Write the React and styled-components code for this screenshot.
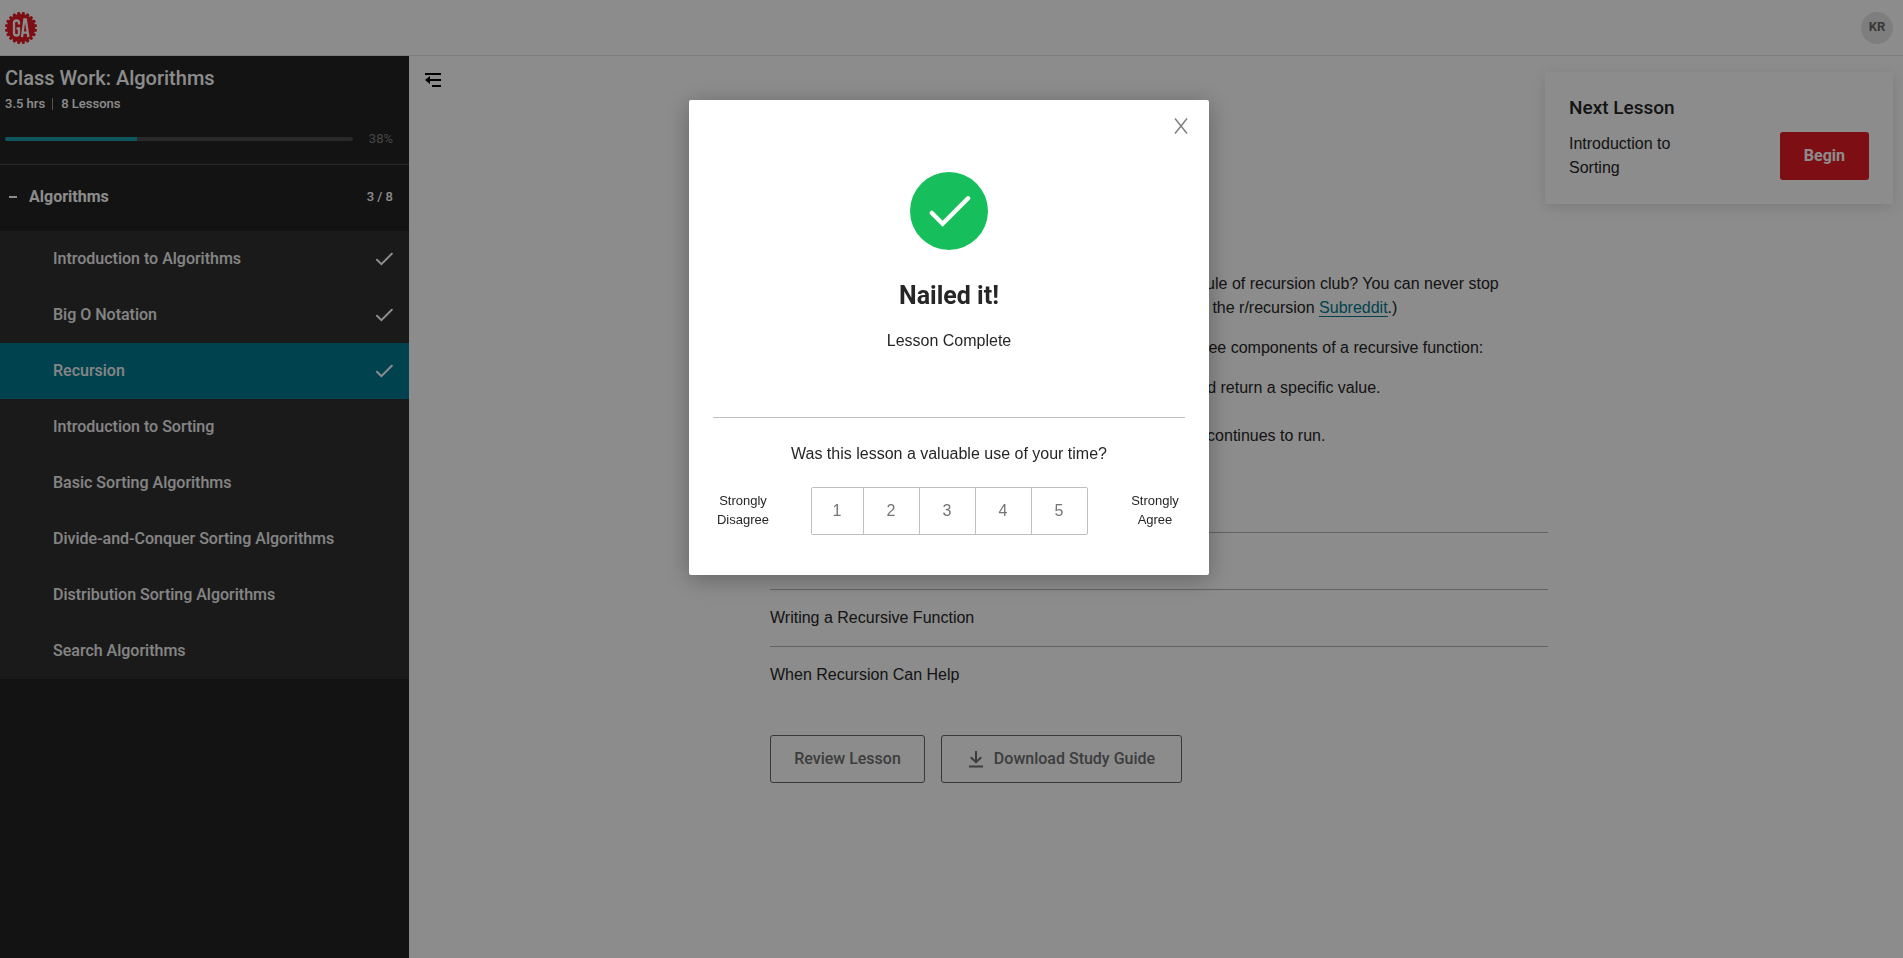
import React from "react";
import styled, { createGlobalStyle } from "styled-components";

const Global = createGlobalStyle`
  *, *::before, *::after { box-sizing: border-box; }
  html, body, #root { height: 100%; }
  body {
    margin: 0;
    background: #fff;
    color: #262626;
    font: 400 16px/24px "Liberation Sans", Arial, sans-serif;
  }
  h1, h2, h3, p, ul, ol { margin: 0; padding: 0; }
  ul, ol { list-style: none; }
  button { font: inherit; cursor: pointer; }
`;

const medium = `font-family: Roboto, "Liberation Sans", sans-serif; font-weight: 500;`;

const Page = styled.div`
  min-height: 100%;
  display: flex;
  flex-direction: column;
`;

const Header = styled.header`
  display: flex;
  align-items: center;
  justify-content: space-between;
  height: 56px;
  padding: 0 10px 0 5px;
  border-bottom: 1px solid #e4e4e4;
`;

const LogoLink = styled.a`
  display: block;
  width: 32px;
  height: 32px;
`;

const Avatar = styled.button`
  width: 32px;
  height: 32px;
  padding: 0 0 2px;
  border: 0;
  border-radius: 50%;
  background: #e6e6e6;
  color: #666;
  ${medium}
  font-weight: 700;
  font-size: 13px;
`;

const Body = styled.div`
  flex: 1;
  display: flex;
`;

const Sidebar = styled.nav`
  flex: 0 0 409px;
  background: #232323;
  color: #fff;
  ${medium}
`;

const CourseInfo = styled.div`
  padding: 10px 16px 15px 5px;
  border-bottom: 1px solid #4d4d4d;
`;

const CourseTitle = styled.h1`
  font-size: 20px;
  line-height: 24px;
  font-weight: 500;
`;

const CourseMeta = styled.p`
  display: flex;
  align-items: center;
  margin-top: 4px;
  font-size: 13px;
  line-height: 20px;

  span + span {
    margin-left: 7px;
    padding-left: 8px;
    border-left: 1px solid #999;
    line-height: 12px;
  }
`;

const ProgressRow = styled.div`
  display: flex;
  align-items: center;
  gap: 16px;
  margin-top: 15px;
  font-size: 13px;
  line-height: 20px;
  font-weight: 400;
  color: #808080;
`;

const Track = styled.div`
  flex: 1;
  height: 4px;
  border-radius: 2px;
  background: #4d4d4d;
  overflow: hidden;
`;

const Fill = styled.div`
  height: 100%;
  background: #1a9fae;
`;

const UnitToggle = styled.button`
  display: flex;
  align-items: center;
  width: 100%;
  height: 66px;
  padding: 0 16px 2px 9px;
  border: 0;
  background: none;
  color: inherit;
  font-size: 16px;
  font-weight: 700;
  text-align: left;

  &::before {
    content: "";
    width: 8px;
    height: 2px;
    margin-right: 12px;
    background: #fff;
  }
`;

const UnitCount = styled.span`
  margin-left: auto;
  font-size: 13px;
  font-weight: 500;
`;

const LessonLink = styled.a`
  display: flex;
  align-items: center;
  justify-content: space-between;
  height: 56px;
  padding: 0 16px 0 53px;
  background: ${(p) => (p.$active ? "#007a8f" : "#313131")};
  color: #f2f2f2;
  text-decoration: none;
`;

const Main = styled.main`
  flex: 1;
  min-width: 0;
  display: flex;
  align-items: flex-start;
`;

const IconButton = styled.button`
  display: flex;
  padding: 0;
  border: 0;
  background: none;
  color: ${(p) => p.$color || "#000"};
`;

const Collapse = styled.div`
  flex: 1;
  padding: 16px 16px 0;
`;

const Article = styled.article`
  flex: 0 1 778px;
  padding: 152px 0 64px;
`;

const ArticleTitle = styled.h2`
  margin-bottom: 24px;
  font-size: 32px;
  line-height: 40px;
`;

const Paragraph = styled.p`
  margin-bottom: 16px;
`;

const TextLink = styled.a`
  color: #007a8f;
  text-decoration: none;
  border-bottom: 1px solid currentColor;
`;

const Components = styled.ol`
  padding-left: 36px;
  list-style: decimal;

  li { margin-bottom: 24px; }
`;

const Sections = styled.ul`
  border-top: 1px solid #b4b4b4;
  margin-top: 36px;

  li { padding: 16px 0; }
  li + li { border-top: 1px solid #b4b4b4; }
`;

const Actions = styled.div`
  display: flex;
  gap: 16px;
  margin-top: 32px;
`;

const Outline = styled.button`
  display: flex;
  align-items: center;
  justify-content: center;
  gap: 10px;
  height: 48px;
  min-width: ${(p) => (p.$wide ? 241 : 155)}px;
  padding: 0 23px;
  border: 1px solid #666;
  border-radius: 3px;
  background: none;
  color: #707070;
  ${medium}
`;

const Aside = styled.aside`
  flex: 1;
  display: flex;
  justify-content: flex-end;
  padding: 16px 10px 0 0;
`;

const Card = styled.section`
  flex: 0 0 348px;
  margin-left: -3px;
  padding: 24px;
  background: #fff;
  box-shadow: 0 3px 12px rgba(0, 0, 0, 0.12);
`;

const CardTitle = styled.h3`
  margin-bottom: 12px;
  font-size: 19px;
  line-height: 24px;
  ${medium}
`;

const CardRow = styled.div`
  display: flex;
  justify-content: space-between;

  p { width: 128px; }
`;

const Primary = styled.button`
  height: 48px;
  padding: 0 24px;
  border: 0;
  border-radius: 3px;
  background: #e31b23;
  color: #fff;
  ${medium}
  font-weight: 700;
`;

const Overlay = styled.div`
  position: fixed;
  inset: 0;
  display: flex;
  justify-content: center;
  align-items: flex-start;
  padding: 100px 5px 24px 0;
  background: rgba(0, 0, 0, 0.45);
`;

const Dialog = styled.div`
  position: relative;
  width: 520px;
  padding: 72px 24px 40px;
  border-radius: 2px;
  background: #fff;
  box-shadow: 0 4px 24px rgba(0, 0, 0, 0.3);
  text-align: center;
`;

const CloseSlot = styled.div`
  position: absolute;
  top: 18px;
  right: 21px;
`;

const Badge = styled.div`
  display: flex;
  align-items: center;
  justify-content: center;
  width: 78px;
  height: 78px;
  margin: 0 auto;
  border-radius: 50%;
  background: #17bf5c;
`;

const DialogTitle = styled.h2`
  margin: 28px 0 15px;
  font: 700 25px/36px Roboto, "Liberation Sans", sans-serif;
`;

const Survey = styled.form`
  margin-top: 64px;
  padding-top: 24px;
  border-top: 1px solid #bfbfbf;
`;

const Rating = styled.div`
  display: flex;
  align-items: center;
  justify-content: space-between;
  margin-top: 21px;
  padding: 0 3px;
`;

const ScaleLabel = styled.span`
  width: 54px;
  padding-bottom: 3px;
  font-size: 13px;
  line-height: 19px;
`;

const Scale = styled.div`
  display: flex;
  height: 48px;
  border: 1px solid #bfbfbf;
  border-radius: 2px;
`;

const ScaleButton = styled.button`
  width: ${(p) => (p.$first ? 51 : 56)}px;
  padding: 0;
  border: 0;
  border-left: ${(p) => (p.$first ? "0" : "1px solid #bfbfbf")};
  background: none;
  color: #757575;
`;

const Tick = ({ size = 18, color = "#fff", width = 2 }) => (
  <svg width={size} height={size} viewBox="0 0 18 18" fill="none" stroke={color} strokeWidth={width} strokeLinecap="round" aria-hidden="true">
    <path d="M2 9.8 L6.4 14.2 L16.8 3.8" />
  </svg>
);

const teeth = Array.from({ length: 20 }, (_, i) => i * 18);

const Logo = () => (
  <svg width="32" height="32" viewBox="0 0 32 32" role="img" aria-label="GA">
    <g fill="#e31b23">
      <circle cx="16" cy="16" r="14" />
      {teeth.map((a) => (
        <rect key={a} x="14.5" y="0" width="3" height="4" rx="0.8" transform={`rotate(${a + 9} 16 16)`} />
      ))}
    </g>
    <g fill="none" stroke="#fff" strokeWidth="2.3">
      <path d="M14 12.5V11a2.5 2.5 0 0 0-5 0v10a2.5 2.5 0 0 0 5 0v-4.5h-2.4" />
      <path d="M17 25.2l2.4-17.8h1.4l2.6 17.8M18 20.6h4.6" />
    </g>
  </svg>
);

const CollapseIcon = () => (
  <svg width="16" height="16" viewBox="0 0 16 16" aria-hidden="true">
    <path d="M0 2h16M3 8h13M7 14h9" fill="none" stroke="currentColor" strokeWidth="2" />
    <path d="M0 8l5-4v8z" fill="currentColor" />
  </svg>
);

const DownloadIcon = () => (
  <svg width="16" height="18" viewBox="0 0 16 18" fill="none" stroke="currentColor" strokeWidth="2" aria-hidden="true">
    <path d="M8 1v11M2.8 7.2L8 12.2l5.2-5M1 16.5h14" />
  </svg>
);

const CloseIcon = () => (
  <svg width="14" height="16" viewBox="0 0 14 16" fill="none" stroke="currentColor" strokeWidth="1.5" aria-hidden="true">
    <path d="M1 .5l12 15M13 .5L1 15.5" />
  </svg>
);

const lessons = [
  { name: "Introduction to Algorithms", done: true },
  { name: "Big O Notation", done: true },
  { name: "Recursion", done: true, active: true },
  { name: "Introduction to Sorting" },
  { name: "Basic Sorting Algorithms" },
  { name: "Divide-and-Conquer Sorting Algorithms" },
  { name: "Distribution Sorting Algorithms" },
  { name: "Search Algorithms" },
];

export default function App() {
  const progress = 38;
  return (
    <>
      <Global />
      <Page>
        <Header>
          <LogoLink href="#"><Logo /></LogoLink>
          <Avatar type="button">KR</Avatar>
        </Header>
        <Body>
          <Sidebar>
            <CourseInfo>
              <CourseTitle>Class Work: Algorithms</CourseTitle>
              <CourseMeta><span>3.5 hrs</span><span>8 Lessons</span></CourseMeta>
              <ProgressRow>
                <Track><Fill style={{ width: `${progress}%` }} /></Track>
                <span>{progress}%</span>
              </ProgressRow>
            </CourseInfo>
            <UnitToggle type="button" aria-expanded="true">
              Algorithms<UnitCount>3 / 8</UnitCount>
            </UnitToggle>
            <ul>
              {lessons.map((l) => (
                <li key={l.name}>
                  <LessonLink href="#" $active={l.active}>
                    {l.name}
                    {l.done && <Tick />}
                  </LessonLink>
                </li>
              ))}
            </ul>
          </Sidebar>
          <Main>
            <Collapse>
              <IconButton type="button" aria-label="Collapse menu"><CollapseIcon /></IconButton>
            </Collapse>
            <Article>
              <ArticleTitle>Recursion</ArticleTitle>
              <Paragraph>
                Recursion is when a function also calls itself. What's the first rule of recursion club? You can never stop
                talking about recursion. (If you don't believe me, look closer at the r/recursion <TextLink href="#">Subreddit</TextLink>.)
              </Paragraph>
              <Paragraph>
                As you go through this lesson, make sure to remember the three components of a recursive function:
              </Paragraph>
              <Components>
                <li>A base case, where the function can stop calling itself and return a specific value.</li>
                <li>A recursive call, which also makes sure that the function continues to run.</li>
                <li>A change of state between the calls.</li>
              </Components>
              <Sections>
                <li>What Is Recursion?</li>
                <li>Writing a Recursive Function</li>
                <li>When Recursion Can Help</li>
              </Sections>
              <Actions>
                <Outline type="button">Review Lesson</Outline>
                <Outline type="button" $wide><DownloadIcon />Download Study Guide</Outline>
              </Actions>
            </Article>
            <Aside>
              <Card>
                <CardTitle>Next Lesson</CardTitle>
                <CardRow>
                  <p>Introduction to Sorting</p>
                  <Primary type="button">Begin</Primary>
                </CardRow>
              </Card>
            </Aside>
          </Main>
        </Body>
      </Page>
      <Overlay>
        <Dialog role="dialog" aria-modal="true" aria-labelledby="result-title">
          <CloseSlot>
            <IconButton type="button" aria-label="Close" $color="#808080"><CloseIcon /></IconButton>
          </CloseSlot>
          <Badge><Tick size={44} width={1.8} /></Badge>
          <DialogTitle id="result-title">Nailed it!</DialogTitle>
          <p>Lesson Complete</p>
          <Survey>
            <p id="survey-question">Was this lesson a valuable use of your time?</p>
            <Rating role="group" aria-labelledby="survey-question">
              <ScaleLabel>Strongly Disagree</ScaleLabel>
              <Scale>
                {[1, 2, 3, 4, 5].map((n) => (
                  <ScaleButton key={n} type="button" $first={n === 1}>{n}</ScaleButton>
                ))}
              </Scale>
              <ScaleLabel>Strongly Agree</ScaleLabel>
            </Rating>
          </Survey>
        </Dialog>
      </Overlay>
    </>
  );
}
